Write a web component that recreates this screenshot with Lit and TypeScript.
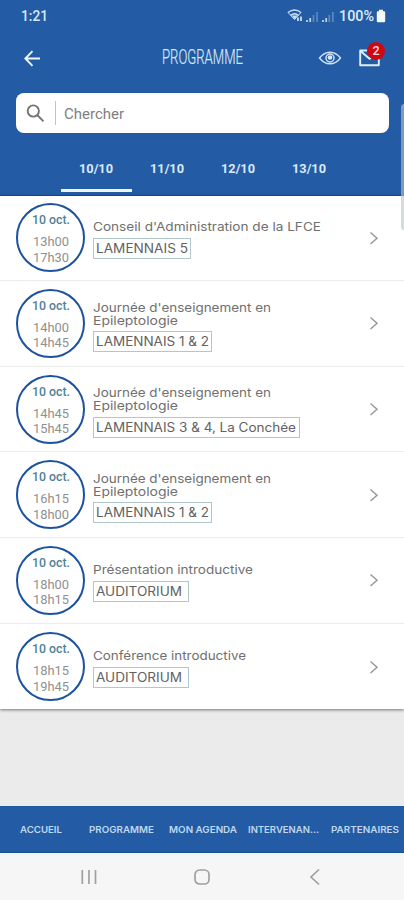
import { LitElement, html, svg, css } from "lit";
import { customElement } from "lit/decorators.js";

interface Line { text: string; width: number; }
interface Session { start: string; end: string; title: Line[]; room: Line; chip: number; }

const SESSIONS: Session[] = [
  { start: "13h00", end: "17h30", title: [{ text: "Conseil d'Administration de la LFCE", width: 228 }], room: { text: "LAMENNAIS 5", width: 92 }, chip: 98 },
  { start: "14h00", end: "14h45", title: [{ text: "Journée d'enseignement en", width: 178 }, { text: "Epileptologie", width: 85 }], room: { text: "LAMENNAIS 1 & 2", width: 113 }, chip: 119 },
  { start: "14h45", end: "15h45", title: [{ text: "Journée d'enseignement en", width: 178 }, { text: "Epileptologie", width: 85 }], room: { text: "LAMENNAIS 3 & 4, La Conchée", width: 200 }, chip: 207 },
  { start: "16h15", end: "18h00", title: [{ text: "Journée d'enseignement en", width: 178 }, { text: "Epileptologie", width: 85 }], room: { text: "LAMENNAIS 1 & 2", width: 113 }, chip: 119 },
  { start: "18h00", end: "18h15", title: [{ text: "Présentation introductive", width: 160 }], room: { text: "AUDITORIUM", width: 86 }, chip: 96 },
  { start: "18h15", end: "19h45", title: [{ text: "Conférence introductive", width: 153 }], room: { text: "AUDITORIUM", width: 86 }, chip: 96 },
];

/** One line of text set to a fixed measure. */
const line = (text: string, width: number, height: number, baseline: number, cls: string) => html`
  <svg class="line ${cls}" width=${width} height=${height}>
    ${svg`<text x="0" y=${baseline} textLength=${width} lengthAdjust="spacingAndGlyphs">${text}</text>`}
  </svg>`;

@customElement("session-row")
export class SessionRow extends LitElement {
  static properties = { session: { attribute: false } };
  declare session: Session;

  static styles = css`
    :host { display: flex; align-items: center; box-sizing: border-box; height: 85.65px; padding: 0 24px 0 16px; border-bottom: 1px solid #ededed; }
    :host(:last-of-type) { border-bottom: 0; }
    .line { display: block; overflow: visible; }
    .disc { box-sizing: border-box; width: 69px; height: 69px; border: 2px solid #1c529f; border-radius: 50%; display: flex; flex-direction: column; align-items: center; flex: none; padding-top: 7px; }
    .date { font: 500 12.5px Roboto, sans-serif; fill: #4f8295; margin-bottom: 8px; }
    .time { font: 400 12.5px Roboto, sans-serif; fill: #8f8f8f; }
    .body { flex: 1; margin-left: 8px; padding-top: 4px; }
    .body.double { padding-top: 6px; }
    .title { font: 400 12.2px Inter, sans-serif; fill: #707070; }
    .chip { box-sizing: border-box; height: 21px; margin: 5px 0 0 -0.5px; padding: 3px 0 0 2px; border: 1px solid #b0c8cc; }
    .double .chip { margin-top: 4.5px; }
    .room { font: 400 12.4px Inter, sans-serif; fill: #626262; }
    .chevron { width: 12px; height: 16px; fill: none; stroke: #999; stroke-width: 1.5; }
  `;

  render() {
    const s = this.session;
    return html`
      <div class="disc">
        ${line("10 oct.", 38, 15, 12, "date")}
        ${line(s.start, 36, 15.5, 11, "time")}
        ${line(s.end, 36, 15.5, 11, "time")}
      </div>
      <div class="body ${s.title.length > 1 ? "double" : ""}">
        ${s.title.map((t) => line(t.text, t.width, 13, 11, "title"))}
        <div class="chip" style="width:${s.chip}px">${line(s.room.text, s.room.width, 14, 11, "room")}</div>
      </div>
      <svg class="chevron" viewBox="0 0 12 16"><path d="M2.5 2.5 9 8.2 2.5 14" /></svg>
    `;
  }
}

@customElement("app-root")
export class AppRoot extends LitElement {
  static styles = css`
    :host { display: flex; flex-direction: column; position: relative; width: 404px; height: 900px; overflow: hidden; background: #ebebeb; }
    .line { display: block; overflow: visible; }
    .header { flex: none; box-sizing: border-box; height: 195.5px; background: #235ca5; border-bottom: 1px solid #124b93; display: flex; flex-direction: column; }
    .status { display: flex; align-items: center; height: 32px; padding: 0 18px 0 21px; }
    .clock { font: 500 14px Roboto, sans-serif; fill: #d9e8fa; margin-right: auto; }
    .signals { width: 48px; height: 16px; margin-right: 4px; }
    .percent { font: 500 14px Roboto, sans-serif; fill: #dfecfb; }
    .battery { width: 10px; height: 14px; margin-left: 2px; }
    .bar { display: flex; align-items: center; height: 52px; padding: 0 23px 0 24px; }
    .back { width: 17px; height: 17px; }
    .heading { font: 300 20.5px Roboto, sans-serif; fill: #d8e8fa; stroke: #d8e8fa; stroke-width: 0.2px; margin: 0 auto 0 120.5px; }
    .eye { width: 24px; height: 16px; margin-right: 17px; }
    .mail { position: relative; width: 22px; height: 18px; }
    .mail svg { display: block; }
    .badge { position: absolute; left: 8px; top: -7px; width: 18px; height: 18px; border-radius: 50%; background: #cf0712; color: #f8dcdc; font: 500 12.5px/18px Roboto, sans-serif; text-align: center; }
    .search { display: flex; align-items: center; box-sizing: border-box; height: 40px; margin: 9px 15px 0 16px; padding-left: 10px; border-radius: 8px; background: #fff; }
    .glass { width: 19px; height: 19px; }
    .rule { width: 1px; height: 24px; margin: 0 8px 0 10px; background: #c3c3c3; }
    .hint { font: 400 14px Roboto, sans-serif; fill: #808080; }
    .tabs { display: flex; flex: 1; margin-left: 61px; }
    .tab { display: flex; flex-direction: column; align-items: center; box-sizing: border-box; width: 71px; height: 59px; padding-top: 28px; border-bottom: 3px solid transparent; }
    .tab.on { border-color: #edf6ff; }
    .day { font: 700 12px Roboto, sans-serif; fill: #dbe9fa; margin-left: -1px; }
    .list { flex: none; background: #fff; height: 513.5px; box-shadow: 0 1px 3px rgba(0, 0, 0, 0.5); }
    .menu { display: flex; align-items: center; box-sizing: border-box; height: 47px; margin-top: auto; padding: 0 0 2px 20px; background: #235ca5; border-top: 1px solid #1e5aa0; border-bottom: 1px solid #164f95; flex: none; }
    .entry { font: 600 9.4px Inter, sans-serif; fill: #bfd8ee; flex: none; }
    .system { flex: none; display: flex; align-items: center; height: 47px; padding-left: 80px; background: #f6f6f6; }
    .system svg { fill: none; stroke: #a0a0a0; stroke-width: 1.7; width: 18px; height: 18px; flex: none; }
    .home { margin-left: 95px; }
    .prev { margin-left: 95px; }
    .handle { position: absolute; right: 0; top: 104px; width: 3px; height: 126px; border-radius: 3px 0 0 3px; background: rgba(190, 195, 200, 0.6); }
  `;

  render() {
    const tabs = ["10/10", "11/10", "12/10", "13/10"];
    const menu: [string, number, number][] = [
      ["ACCUEIL", 42, 27], ["PROGRAMME", 65, 15], ["MON AGENDA", 68, 11], ["INTERVENAN...", 71, 12], ["PARTENAIRES", 68, 0],
    ];
    return html`
      <header class="header">
        <div class="status">
          ${line("1:21", 27, 16, 13, "clock")}
          <svg class="signals" viewBox="0 0 48 16">
            <g fill="none" stroke="#c9dff5" stroke-width="1.5">
              <path d="M1 4.500Q7.500 -.500 14 4.500M3.500 7.500Q7.500 4 11.500 7.500" />
              <path d="M1 4.500 7.500 11.500 14 4.500" stroke-width="1" />
            </g>
            <path d="M5 7.500H10.500L7.500 11.500Z" fill="#c9dff5" />
            <path d="M11 13V9.500M14 13V8.500" stroke="#c9dff5" stroke-width="1.8" />
            <path d="M20 14V12M23.2 14V10M36 14V12M39.2 14V10" stroke="#c0d8f0" stroke-width="1.7" />
            <path d="M26.5 14V7M30 14V4M42.3 14V7M45.8 14V4" stroke="#5e8bc2" stroke-width="1.6" />
          </svg>
          ${line("100%", 35, 16, 13, "percent")}
          <svg class="battery" viewBox="0 0 10 14"><path d="M3 .800h4v1.400h1q1.200 0 1.200 1.200V12q0 1.200-1.200 1.200H2Q.800 13.200.800 12V3.400q0-1.200 1.200-1.200h1z" fill="#f5faff" /></svg>
        </div>
        <div class="bar">
          <svg class="back" viewBox="0 0 17 17"><path d="M16 8.500H1.500M8.500 1.200 1.300 8.500 8.500 15.800" fill="none" stroke="#edf6ff" stroke-width="1.900" /></svg>
          ${line("PROGRAMME", 81, 22, 17.2, "heading")}
          <svg class="eye" viewBox="0 0 24 16"><g fill="none" stroke="#cfe1f6"><path d="M1.500 8Q6 2.200 12 2.200T22.500 8Q18 13.800 12 13.800T1.500 8Z" stroke-width="1.400" /><circle cx="12" cy="8" r="4" stroke-width="1.500" /></g><circle cx="12" cy="7.500" r="2.300" fill="#dbe9fa" /></svg>
          <div class="mail">
            <svg width="22" height="18" viewBox="0 0 22 18"><path d="M1.200 1.500H19.800V16.300H1.200ZM1.200 1.800 10.500 9.800 19.800 1.800" fill="none" stroke="#dfedfc" stroke-width="1.900" stroke-linejoin="round" /></svg>
            <span class="badge">2</span>
          </div>
        </div>
        <div class="search">
          <svg class="glass" viewBox="0 0 19 19"><g fill="none" stroke="#757575" stroke-width="1.900"><circle cx="7.300" cy="7" r="5.600" /><path d="M11.200 11 17.500 17.300" /></g></svg>
          <span class="rule"></span>
          ${line("Chercher", 60, 18, 14.500, "hint")}
        </div>
        <nav class="tabs">
          ${tabs.map((t, i) => html`<div class="tab ${i === 0 ? "on" : ""}">${line(t, 34, 16, 12, "day")}</div>`)}
        </nav>
      </header>
      <main class="list">${SESSIONS.map((s) => html`<session-row .session=${s}></session-row>`)}</main>
      <nav class="menu">
        ${menu.map(([t, w, gap]) => html`${line(t, w, 12, 9.5, "entry")}<span style="width:${gap}px;flex:none"></span>`)}
      </nav>
      <div class="system">
        <svg viewBox="0 0 18 18"><path d="M2.300 2V16M9 2V16M15.500 2V16" /></svg>
        <svg class="home" viewBox="0 0 18 18"><rect x="2" y="2" width="14" height="14" rx="4.500" /></svg>
        <svg class="prev" viewBox="0 0 18 18"><path d="M13 1.500 5 9 13 16.500" /></svg>
      </div>
      <div class="handle"></div>
    `;
  }
}
